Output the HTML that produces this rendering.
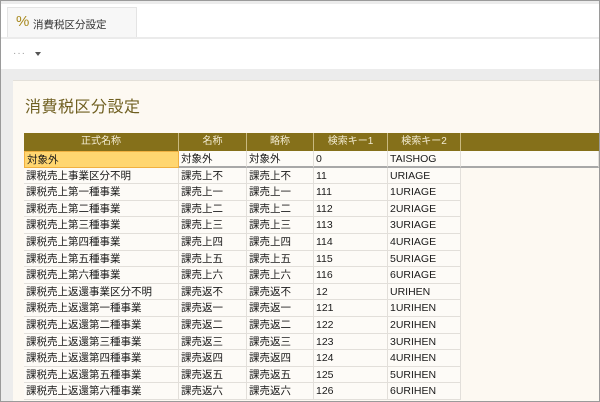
<!DOCTYPE html>
<html><head><meta charset="utf-8"><style>
*{margin:0;padding:0;box-sizing:border-box}
body{width:600px;height:402px;overflow:hidden;background:#fff;font-family:"Liberation Sans","Noto Sans CJK JP",sans-serif;position:relative}
.frame{position:absolute;left:0;top:0;width:600px;height:402px;border:1px solid #9a9a9a;z-index:10;pointer-events:none}
.topbar{position:absolute;left:1px;top:1px;width:598px;height:3px;background:#ececec}
.tab{position:absolute;left:7px;top:7px;width:130px;height:31px;background:#f7f7f7;border:1px solid #e4e4e4;border-bottom:none}
.tab .ic{position:absolute;left:8px;top:5px;font-size:15px;color:#a8891e}
.tab .t{position:absolute;left:25px;top:9px;font-size:10.5px;color:#333}
.l1{position:absolute;left:1px;top:37px;width:598px;height:2px;background:#ebebeb}
.dots{position:absolute;left:13px;top:48px;font-size:10px;color:#999;letter-spacing:1px}
.tri{position:absolute;left:35px;top:52px;width:0;height:0;border-left:3.5px solid transparent;border-right:3.5px solid transparent;border-top:4px solid #555}
.gray{position:absolute;left:1px;top:69px;width:598px;height:332px;background:#ececec}
.panel{position:absolute;left:13px;top:80px;width:586px;height:321px;background:#fdf9f2;border-top:1px solid #e3e0da}
.title{position:absolute;left:25px;top:93px;font-size:16px;color:#6f5f20;letter-spacing:0.5px}
.hdr{position:absolute;left:24px;top:133px;width:575px;height:18px;background:#85701a}
.hc{position:absolute;top:133px;height:18px;line-height:18px;text-align:center;color:#f3ecd2;font-size:10px;border-right:1px solid #c9b980}
.c{position:absolute;line-height:16px;font-size:10.5px;color:#1a1a1a;padding-left:2px;background:#fdfbf7;border-right:1px solid #e2dfda;border-bottom:1px solid #e2dfda;white-space:nowrap}
</style></head><body>
<div class="topbar"></div>
<div class="tab"><span class="ic">%</span><span class="t">消費税区分設定</span></div>
<div class="l1"></div>
<div class="dots">···</div><div class="tri"></div>
<div class="gray"></div>
<div class="panel"></div>
<div class="title">消費税区分設定</div>
<div class="hdr"></div>
<div class="hc" style="left:24px;width:155px">正式名称</div>
<div class="hc" style="left:179px;width:68px">名称</div>
<div class="hc" style="left:247px;width:67px">略称</div>
<div class="hc" style="left:314px;width:74px">検索キー1</div>
<div class="hc" style="left:388px;width:73px">検索キー2</div>
<div id="rows"></div>
<script>
var d=[["対象外","対象外","対象外","0","TAISHOG"],
["課税売上事業区分不明","課売上不","課売上不","11","URIAGE"],
["課税売上第一種事業","課売上一","課売上一","111","1URIAGE"],
["課税売上第二種事業","課売上二","課売上二","112","2URIAGE"],
["課税売上第三種事業","課売上三","課売上三","113","3URIAGE"],
["課税売上第四種事業","課売上四","課売上四","114","4URIAGE"],
["課税売上第五種事業","課売上五","課売上五","115","5URIAGE"],
["課税売上第六種事業","課売上六","課売上六","116","6URIAGE"],
["課税売上返還事業区分不明","課売返不","課売返不","12","URIHEN"],
["課税売上返還第一種事業","課売返一","課売返一","121","1URIHEN"],
["課税売上返還第二種事業","課売返二","課売返二","122","2URIHEN"],
["課税売上返還第三種事業","課売返三","課売返三","123","3URIHEN"],
["課税売上返還第四種事業","課売返四","課売返四","124","4URIHEN"],
["課税売上返還第五種事業","課売返五","課売返五","125","5URIHEN"],
["課税売上返還第六種事業","課売返六","課売返六","126","6URIHEN"]];
var L=[24,179,247,314,388],W=[155,68,67,74,73],h="";
for(var i=0;i<d.length;i++){var t=Math.round(151+i*16.6),nt=Math.round(151+(i+1)*16.6),hh=nt-t;
for(var j=0;j<5;j++){var s="left:"+L[j]+"px;top:"+t+"px;width:"+W[j]+"px;height:"+hh+"px;";
if(i==0&&j==0)s+="background:#ffd670;border:1px solid #f0b040;";
if(i==0&&j>0)s+="border-bottom:2px solid #a8a8a8;";
h+='<div class="c" style="'+s+'">'+d[i][j]+'</div>';}
if(i==0)h+='<div class="c" style="left:461px;top:'+t+'px;width:138px;height:'+hh+'px;border-bottom:2px solid #a8a8a8"></div>';}
document.getElementById("rows").innerHTML=h;
</script>
<div class="frame"></div>
</body></html>
